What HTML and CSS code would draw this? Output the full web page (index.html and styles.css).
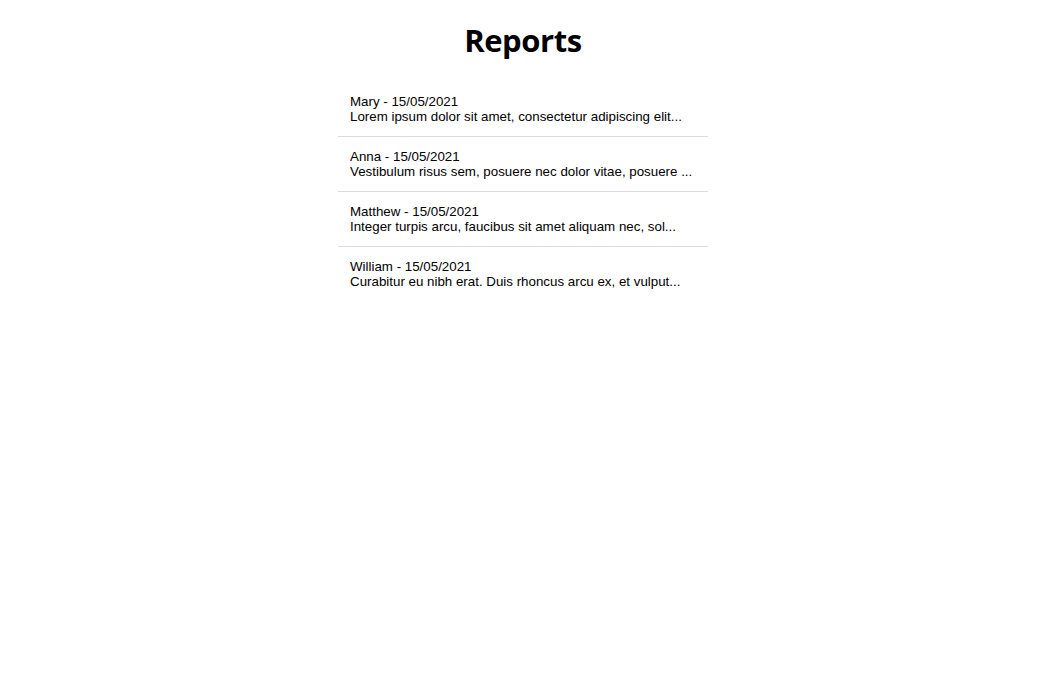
FILE: index.html
```html
<!DOCTYPE html>
<html>
<head>
<meta charset="utf-8">
<link rel="stylesheet" href="styles.css">
</head>
<body>
<div class="page">
  <h1 class="title">Reports</h1>
  <ul class="reports">
    <li class="report">
      <div class="report-head">Mary - 15/05/2021</div>
      <div class="report-body">Lorem ipsum dolor sit amet, consectetur adipiscing elit...</div>
    </li>
    <li class="report">
      <div class="report-head">Anna - 15/05/2021</div>
      <div class="report-body">Vestibulum risus sem, posuere nec dolor vitae, posuere ...</div>
    </li>
    <li class="report">
      <div class="report-head">Matthew - 15/05/2021</div>
      <div class="report-body">Integer turpis arcu, faucibus sit amet aliquam nec, sol...</div>
    </li>
    <li class="report">
      <div class="report-head">William - 15/05/2021</div>
      <div class="report-body">Curabitur eu nibh erat. Duis rhoncus arcu ex, et vulput...</div>
    </li>
  </ul>
</div>
</body>
</html>
```
FILE: styles.css
```css
html, body {
  margin: 0;
  padding: 0;
  background: #fff;
}
.page {
  display: flex;
  flex-direction: column;
  align-items: center;
  font-family: "Liberation Sans", Arial, sans-serif;
  color: #000;
}
.title {
  font-family: "Open Sans", "Noto Sans", sans-serif;
  font-weight: 700;
  font-size: 31px;
  line-height: 40px;
  margin: 20px 0 22px;
  letter-spacing: -0.4px;
}
.reports {
  list-style: none;
  margin: 0;
  padding: 0;
  width: 370px;
}
.report {
  padding: 12px;
  font-size: 13.333px;
  line-height: 15px;
  border-bottom: 1px solid #dcdcdc;
}
.report:last-child {
  border-bottom: none;
}
```
